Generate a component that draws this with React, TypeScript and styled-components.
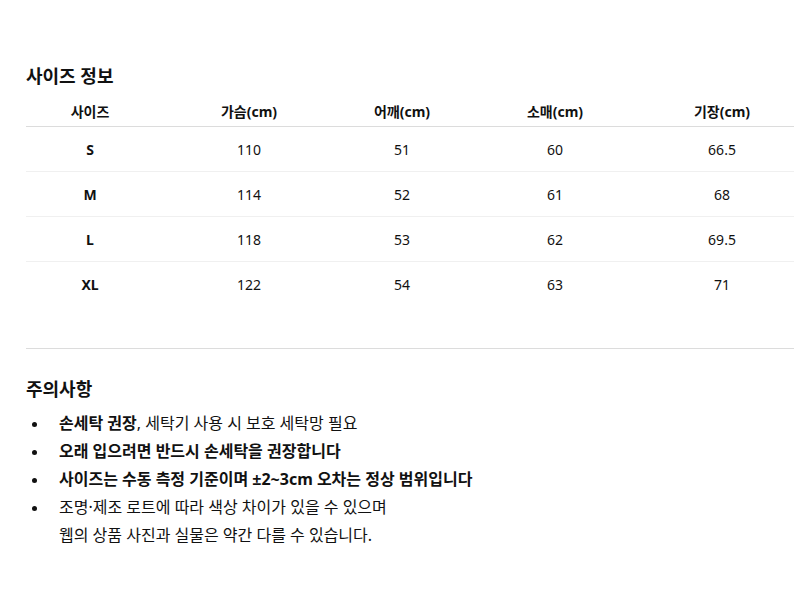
import React from "react";
import styled, { createGlobalStyle } from "styled-components";

const GlobalStyle = createGlobalStyle`
  html, body {
    margin: 0;
    padding: 0;
    background: #ffffff;
  }
  body {
    font-family: "Noto Sans", "Noto Sans CJK KR", sans-serif;
    color: #111111;
  }
`;

const Page = styled.div`
  width: 768px;
  padding: 64px 0 40px 26px;
`;

const SectionTitle = styled.h2`
  margin: 0;
  font-size: 18px;
  line-height: 24px;
  font-weight: 700;
`;

const Table = styled.table`
  width: 768px;
  margin-top: 7px;
  border-collapse: collapse;
  table-layout: fixed;
`;

const HeadCell = styled.th<{ w: number }>`
  width: ${(p) => p.w}px;
  height: 31px;
  padding: 0;
  font-size: 14px;
  font-weight: 700;
  text-align: center;
  border-bottom: 1px solid #dcdcdc;
`;

const Row = styled.tr`
  &:not(:last-child) td {
    border-bottom: 1px solid #f0f0f0;
  }
`;

const Cell = styled.td<{ strong?: boolean }>`
  height: 44px;
  padding: 0;
  font-size: 14px;
  font-weight: ${(p) => (p.strong ? 700 : 400)};
  text-align: center;
`;

const Divider = styled.hr`
  margin: 42px 0 0;
  border: none;
  border-top: 1px solid #dcdcdc;
`;

const NoticeTitle = styled(SectionTitle)`
  margin-top: 28px;
`;

const NoticeList = styled.ul`
  margin: 8px 0 0;
  padding: 0 0 0 22px;
  list-style: disc;
`;

const NoticeItem = styled.li<{ strong?: boolean }>`
  font-size: 16px;
  line-height: 28px;
  font-weight: ${(p) => (p.strong ? 700 : 400)};
  padding-left: 11px;
  &::marker {
    font-size: 13px;
  }
`;

const Bold = styled.b`
  font-weight: 700;
`;

const columns = [
  { label: "사이즈", w: 128 },
  { label: "가슴(cm)", w: 190 },
  { label: "어깨(cm)", w: 116 },
  { label: "소매(cm)", w: 190 },
  { label: "기장(cm)", w: 144 },
];

const sizes = [
  ["S", "110", "51", "60", "66.5"],
  ["M", "114", "52", "61", "68"],
  ["L", "118", "53", "62", "69.5"],
  ["XL", "122", "54", "63", "71"],
];

const App = () => {
  return (
    <>
      <GlobalStyle />
      <Page>
        <SectionTitle>사이즈 정보</SectionTitle>
        <Table>
          <thead>
            <tr>
              {columns.map((c) => (
                <HeadCell key={c.label} w={c.w}>
                  {c.label}
                </HeadCell>
              ))}
            </tr>
          </thead>
          <tbody>
            {sizes.map((row) => (
              <Row key={row[0]}>
                {row.map((v, i) => (
                  <Cell key={i} strong={i === 0}>
                    {v}
                  </Cell>
                ))}
              </Row>
            ))}
          </tbody>
        </Table>

        <Divider />

        <NoticeTitle>주의사항</NoticeTitle>
        <NoticeList>
          <NoticeItem>
            <Bold>손세탁 권장</Bold>, 세탁기 사용 시 보호 세탁망 필요
          </NoticeItem>
          <NoticeItem strong>오래 입으려면 반드시 손세탁을 권장합니다</NoticeItem>
          <NoticeItem strong>
            사이즈는 수동 측정 기준이며 ±2~3cm 오차는 정상 범위입니다
          </NoticeItem>
          <NoticeItem>
            조명·제조 로트에 따라 색상 차이가 있을 수 있으며
            <br />
            웹의 상품 사진과 실물은 약간 다를 수 있습니다.
          </NoticeItem>
        </NoticeList>
      </Page>
    </>
  );
};

export default App;
